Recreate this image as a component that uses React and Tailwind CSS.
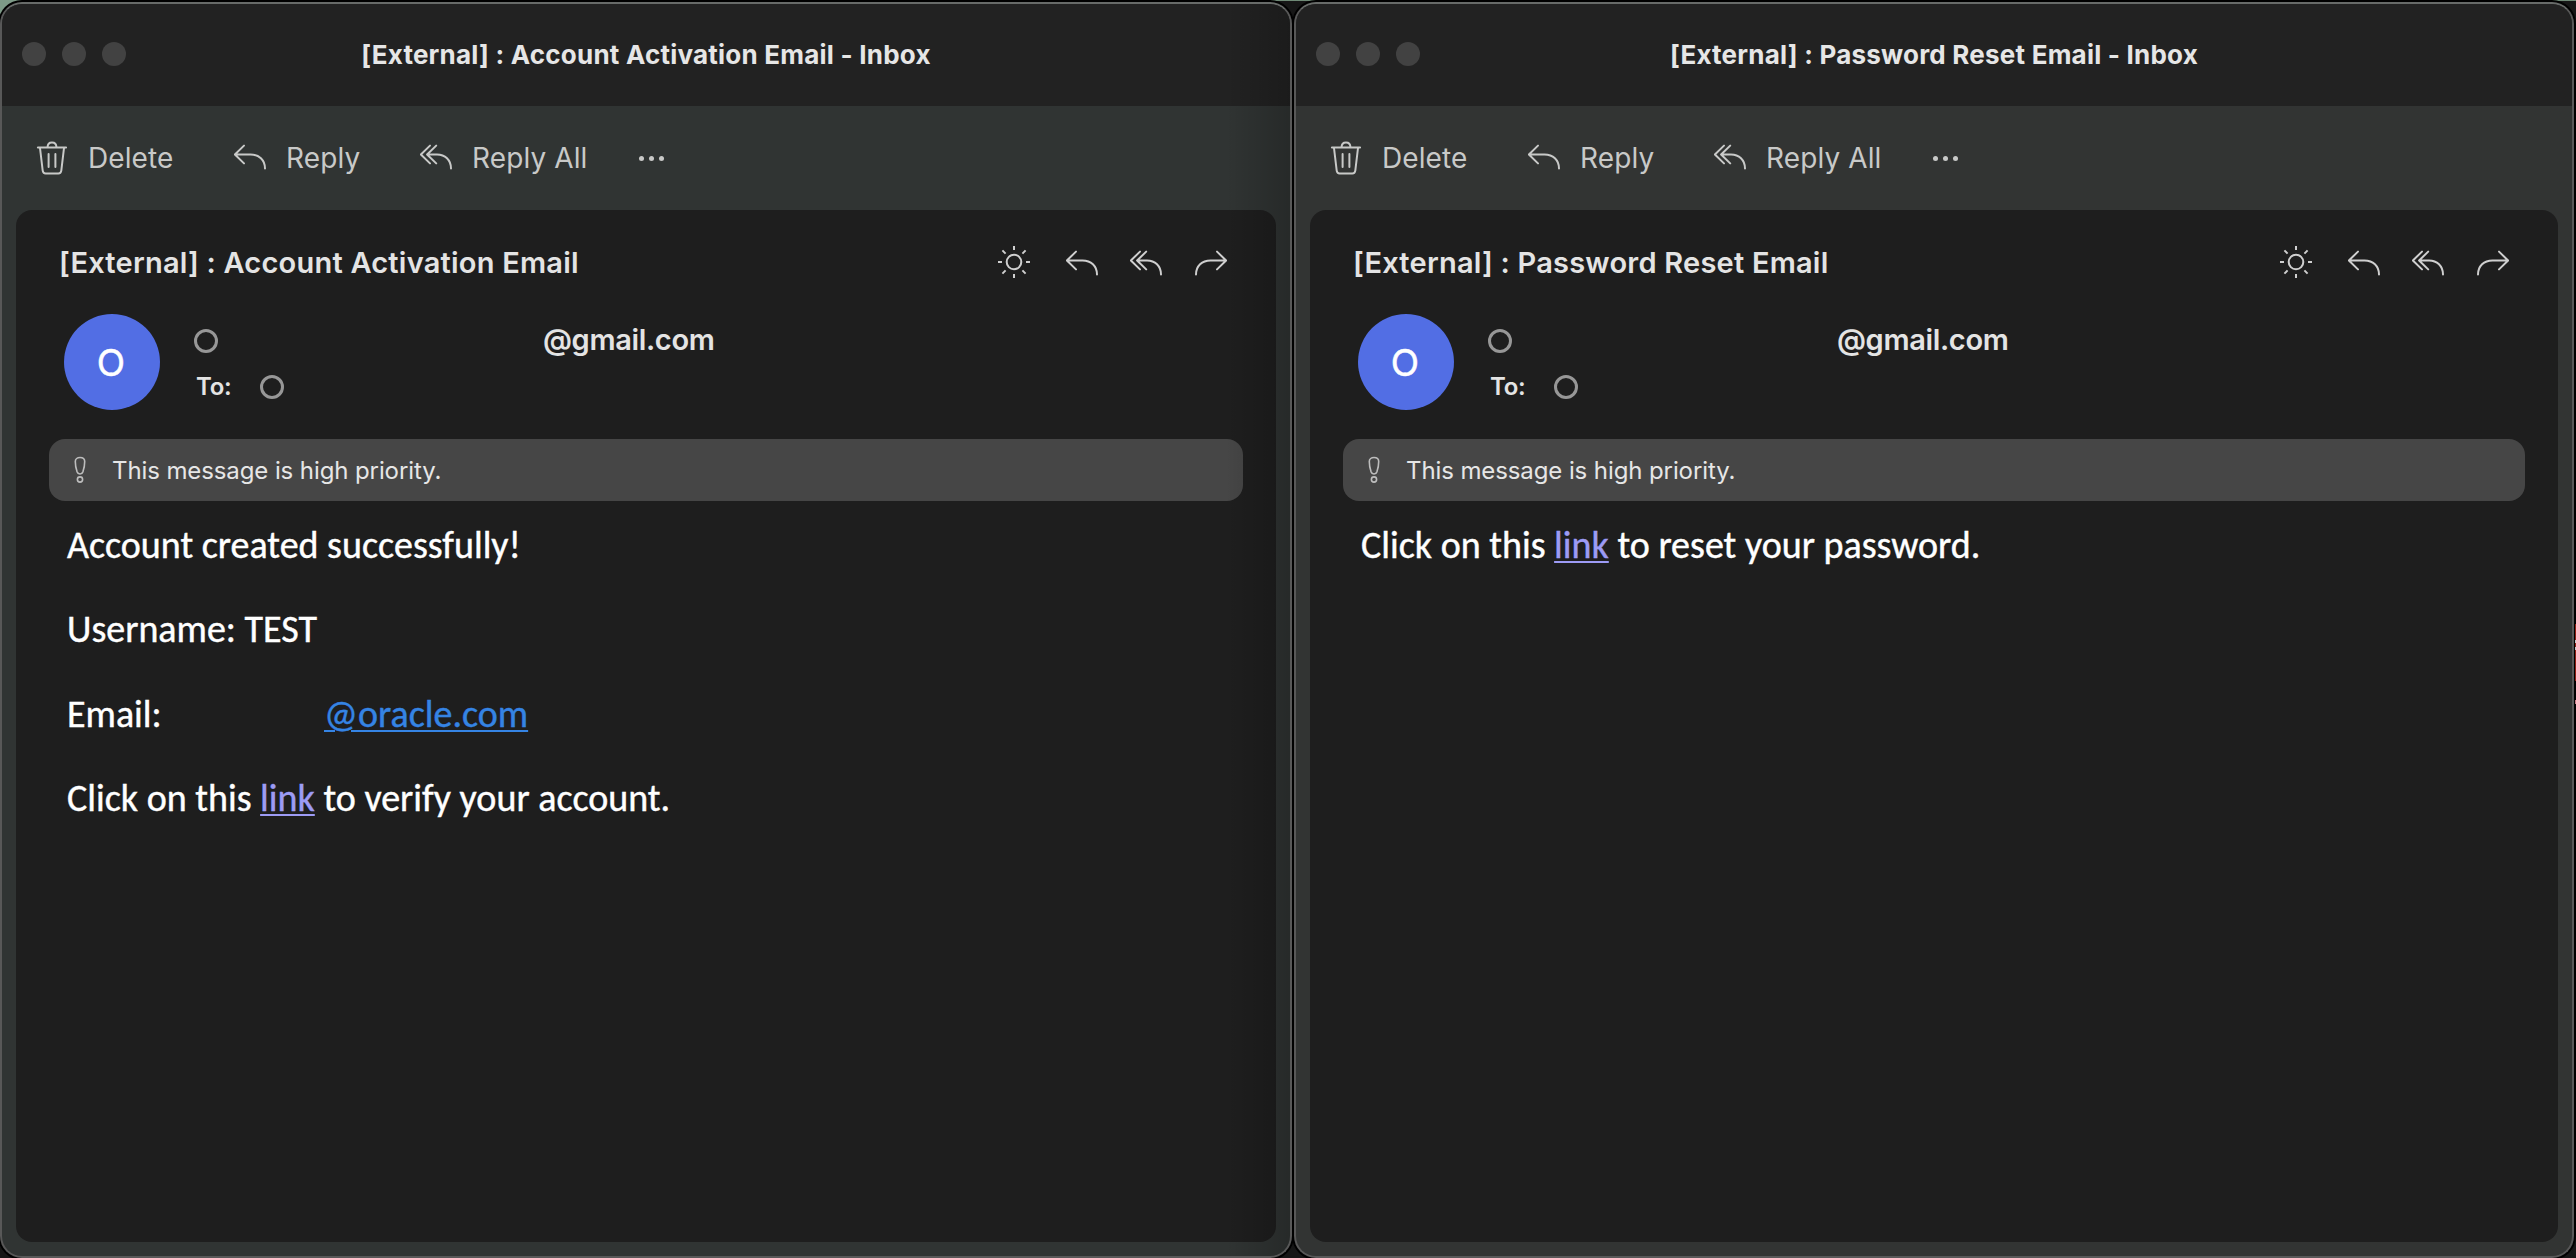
const stroke = { fill: "none", stroke: "currentColor", strokeWidth: 2, strokeLinecap: "round", strokeLinejoin: "round" };

function TrashIcon() {
  return (
    <svg className="h-9 w-8 shrink-0" viewBox="0 0 32 36" {...stroke}>
      <path d="M2 7.5H30" strokeWidth="2.2" />
      <path d="M11.6 7C11.6 3.9 13.6 2.4 16 2.4S20.4 3.9 20.4 7" />
      <path d="M4 8L6.7 30.6Q7.1 33.4 9.6 33.4H22.4Q24.9 33.4 25.3 30.6L28 8" />
      <path d="M12.6 14V27M19.4 14V27" />
    </svg>
  );
}

function ReplyIcon() {
  return (
    <svg className="h-7 w-8 shrink-0" viewBox="0 0 32 28" {...stroke}>
      <path d="M10 1.6L.9 10.5L10 19.4M1.2 10.5H16.5C25 10.5 31 16 31 24.6" />
    </svg>
  );
}

function ReplyAllIcon() {
  return (
    <svg className="h-7 w-8 shrink-0" viewBox="0 0 32 28" {...stroke}>
      <path d="M10 1.6L.9 10.5L10 19.4M16.2 1.6L7.1 10.5L16.2 19.4M7.3 10.5H17C25 10.5 31 16 31 24.6" />
    </svg>
  );
}

function ForwardIcon() {
  return (
    <svg className="h-7 w-8 shrink-0" viewBox="0 0 32 28" {...stroke}>
      <path d="M22 1.6L31.1 10.5L22 19.4M30.8 10.5H15.5C7 10.5 1 16 1 24.6" />
    </svg>
  );
}

function SunIcon() {
  return (
    <svg className="size-8 shrink-0" viewBox="0 0 32 32" {...stroke} strokeLinecap="butt">
      <circle cx="16" cy="16" r="7.3" />
      <path d="M16 0V4M16 28V32M0 16H4M28 16H32M4.4 4.4L7.6 7.6M24.4 24.4L27.6 27.6M4.4 27.6L7.6 24.4M24.4 7.6L27.6 4.4" />
    </svg>
  );
}

function PriorityIcon() {
  return (
    <svg className="h-7 w-3 shrink-0 text-[#bdbdbd]" viewBox="0 0 12 28" {...stroke} strokeWidth="1.6">
      <path d="M1.3 5.5C1.3 2.9 3.4 1.5 6 1.5S10.7 2.9 10.7 5.5C10.7 9 10 12.5 9 15.6C8.4 17.2 7.4 18 6 18S3.6 17.2 3 15.6C2 12.5 1.3 9 1.3 5.5Z" />
      <circle cx="6" cy="23.5" r="2.6" />
    </svg>
  );
}

const link = "underline decoration-[2px] underline-offset-[3px]";

function Window({ subject, shade, className, children }) {
  return (
    <section
      className={`relative flex h-[1256px] flex-col overflow-hidden rounded-[22px] border-2 border-[#585858] border-t-[#686b69] font-['Inter',sans-serif] shadow-[0_0_0_2px_#000] ${className}`}
    >
      <header className="flex h-[102px] shrink-0 bg-[#222222]">
        <div className="flex h-[100px] w-[126px] items-center gap-4 pl-5">
          <span className="size-6 rounded-full bg-[#424242]" />
          <span className="size-6 rounded-full bg-[#424242]" />
          <span className="size-6 rounded-full bg-[#424242]" />
        </div>
        <h1 className="mr-[126px] flex-1 text-center text-[26px] leading-[102px] font-bold tracking-[0.22px] text-[#e6e6e6]">
          {subject} - Inbox
        </h1>
      </header>

      <nav className="flex h-[104px] shrink-0 items-center text-[28px] leading-10 tracking-[0.1px] text-[#c8c9c8]">
        <div className="flex w-[196px] items-center pl-[34px]">
          <TrashIcon />
          <span className="ml-5">Delete</span>
        </div>
        <div className="flex w-[186px] items-center pl-9">
          <ReplyIcon />
          <span className="ml-5">Reply</span>
        </div>
        <div className="flex w-[224px] items-center pl-9">
          <ReplyAllIcon />
          <span className="ml-5">Reply All</span>
        </div>
        <div className="flex w-[87px] items-center justify-center gap-[5px]">
          <span className="size-[5px] rounded-full bg-current" />
          <span className="size-[5px] rounded-full bg-current" />
          <span className="size-[5px] rounded-full bg-current" />
        </div>
      </nav>

      <main className="mx-3.5 mb-3.5 flex-1 rounded-2xl bg-[#1e1e1e]">
        <div className="flex h-[104px] items-center justify-between pr-[49px] pl-[43px] text-[#cfcfcf]">
          <h2 className="pt-px text-[29px] leading-10 font-semibold tracking-[0.22px] text-[#e4e4e4]">{subject}</h2>
          <div className="flex items-center">
            <SunIcon />
            <span className="mt-[3px] ml-9 flex"><ReplyIcon /></span>
            <span className="mt-[3px] ml-8 flex"><ReplyAllIcon /></span>
            <span className="mt-[3px] ml-[33px] flex"><ForwardIcon /></span>
          </div>
        </div>

        <div className="flex h-24 pl-12">
          <div className="flex size-24 items-center justify-center rounded-full bg-[#526ee4] pt-0.5 pr-0.5 text-[37px] text-white [-webkit-text-stroke:0.5px]">O</div>
          <div className="ml-[34px] flex-1 text-[#e4e4e4]">
            <div className="flex h-[54px] items-center">
              <span className="size-6 rounded-full border-[3px] border-[#979797]" />
              <span className="ml-[325px] pb-[3px] text-[29px] leading-10 font-semibold tracking-[-0.35px]">@gmail.com</span>
            </div>
            <div className="flex h-[38px] items-center">
              <span className="w-[66px] pl-0.5 text-[24px] leading-8 font-semibold tracking-[-0.3px]">To:</span>
              <span className="size-6 rounded-full border-[3px] border-[#979797]" />
            </div>
          </div>
        </div>

        <div className="mx-[33px] mt-[29px] flex h-[62px] items-center rounded-2xl bg-[#464646] pl-[25px]">
          <PriorityIcon />
          <p className="ml-[26px] pt-px text-[24px] leading-8 tracking-[-0.1px] text-[#e6e6e6]">This message is high priority.</p>
        </div>

        <div className="pt-0.5 pl-[51px] font-['Carlito','Lato',sans-serif] text-[38px] leading-[84.4px] whitespace-nowrap text-white [-webkit-text-stroke:0.4px]">
          {children}
        </div>
      </main>
      {shade && <div className="pointer-events-none absolute inset-y-0 right-0 w-16 bg-linear-to-r from-transparent to-black/20" />}
    </section>
  );
}

export default function App() {
  return (
    <div className="relative flex h-[1258px] w-[2576px] gap-0.5 overflow-hidden bg-linear-to-b from-[#6f8a76] from-[1px] to-[#161616] to-[1px] pt-0.5">
      <div className="absolute top-0 left-0 size-5 bg-[#7d9a87]" />
      <Window subject="[External] : Account Activation Email" shade className="w-[1292px] bg-[#303433]">
        <p>Account created successfully!</p>
        <p>Username: TEST</p>
        <p className="flex">
          <span className="w-[257px]">Email:</span>
          <a className={`text-[#3584e4] ${link}`}>@oracle.com</a>
        </p>
        <p>
          Click on this <a className={`text-[#9d9bf5] ${link}`}>link</a> to verify your account.
        </p>
      </Window>
      <Window subject="[External] : Password Reset Email" className="w-[1280px] bg-[#323433]">
        <p>
          Click on this <a className={`text-[#9d9bf5] ${link}`}>link</a> to reset your password.
        </p>
      </Window>
      <div className="absolute top-[624px] right-0 flex h-20 w-px flex-col bg-black">
        <span className="h-[57px] bg-[#8f1d12]" />
        <span className="mt-[19px] h-1 bg-[#c07a85]" />
      </div>
      <div className="absolute top-[640px] right-0 flex w-px flex-col gap-1">
        <span className="h-[3px] bg-[#c9c9c9]" />
        <span className="h-[3px] bg-[#c9c9c9]" />
      </div>
    </div>
  );
}
